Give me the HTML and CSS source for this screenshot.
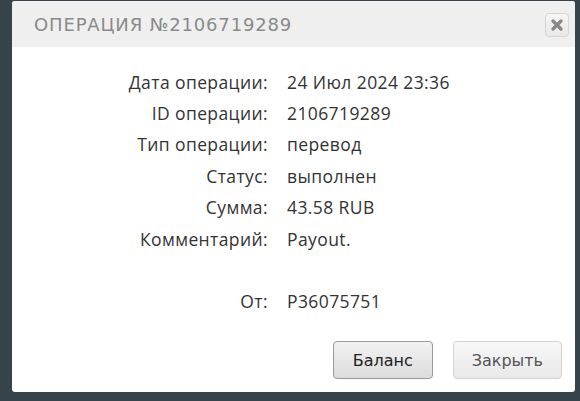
FILE: index.html
```html
<!DOCTYPE html>
<html>

<head>
    <meta name="viewport" content="width=device-width, minimum-scale=1">
    <title>Операция</title>
    <link rel="stylesheet" href="styles.css">
</head>

<body>
    <!-- operation details dialog -->
    <div class="dialog" role="dialog" aria-labelledby="dialog-title">
        <div class="dialog-header">
            <h1 id="dialog-title">Операция №2106719289</h1>
            <button class="close-btn" aria-label="Закрыть">
                <svg width="14" height="14" viewBox="0 0 14 14">
                    <path d="M3 3 L11 11 M11 3 L3 11" stroke="#888" stroke-width="3.4" stroke-linecap="round" />
                </svg>
            </button>
        </div>
        <div class="dialog-body">
            <dl class="details">
                <dt>Дата операции:</dt>
                <dd>24 Июл 2024 23:36</dd>
                <dt>ID операции:</dt>
                <dd>2106719289</dd>
                <dt>Тип операции:</dt>
                <dd>перевод</dd>
                <dt>Статус:</dt>
                <dd>выполнен</dd>
                <dt>Сумма:</dt>
                <dd>43.58 RUB</dd>
                <dt>Комментарий:</dt>
                <dd>Payout.</dd>
                <dt class="spaced">От:</dt>
                <dd class="spaced">P36075751</dd>
            </dl>
        </div>
        <div class="dialog-buttons">
            <button class="btn btn-primary">Баланс</button>
            <button class="btn">Закрыть</button>
        </div>
    </div>
</body>

</html>
```

FILE: styles.css
```css
:root {
    --backdrop: #36434b;
    --header: #efefef;
    --title: #8a8a8a;
    --text: #333;
}

* {
    box-sizing: border-box;
    padding: 0;
    margin: 0;
}

body {
    background: var(--backdrop);
    height: 100vh;
    overflow: hidden;
}

.dialog {
    display: flex;
    flex-direction: column;
    width: 563px;
    height: 391px;
    margin: 1px 0 0 12px;
    background: #fff;
    border-radius: 3px;
    overflow: hidden;
}

.dialog-header {
    display: flex;
    align-items: center;
    justify-content: space-between;
    height: 46px;
    padding: 0 6px 0 22px;
    background: var(--header);
}

.dialog-header h1 {
    font-family: "DejaVu Sans", sans-serif;
    font-size: 18px;
    font-weight: normal;
    letter-spacing: 0.85px;
    text-transform: uppercase;
    color: var(--title);
}

.close-btn {
    display: flex;
    align-items: center;
    justify-content: center;
    width: 24px;
    height: 24px;
    margin-top: 2px;
    background: linear-gradient(#f6f6f6, #e8e8e8);
    border: 1px solid #d6d6d6;
    border-radius: 4px;
    cursor: pointer;
}

.dialog-body {
    flex: 1;
    padding-top: 19px;
}

.details {
    display: grid;
    grid-template-columns: 256px 1fr;
    column-gap: 19px;
    grid-auto-rows: 31.4px;
    align-items: center;
    font-family: "Open Sans", sans-serif;
    font-size: 17.5px;
    letter-spacing: 0.4px;
    color: var(--text);
}

.details dt {
    text-align: right;
}

/* leave one empty row before the sender line */
.details dt.spaced {
    grid-row: 8;
    grid-column: 1;
}

.details dd.spaced {
    grid-row: 8;
    grid-column: 2;
}

.dialog-buttons {
    display: flex;
    justify-content: flex-end;
    gap: 20px;
    padding: 0 13px 13px 0;
}

.btn {
    height: 38px;
    min-width: 100px;
    padding: 0 18px;
    font-family: "DejaVu Sans", sans-serif;
    font-size: 16px;
    color: #555;
    background: linear-gradient(#f7f7f7, #e9e9e9);
    border: 1px solid #d3d3d3;
    border-radius: 4px;
    cursor: pointer;
}

.btn-primary {
    color: #222;
    background: linear-gradient(#f2f2f2, #dcdcdc);
    border-color: #9a9a9a;
}
```
